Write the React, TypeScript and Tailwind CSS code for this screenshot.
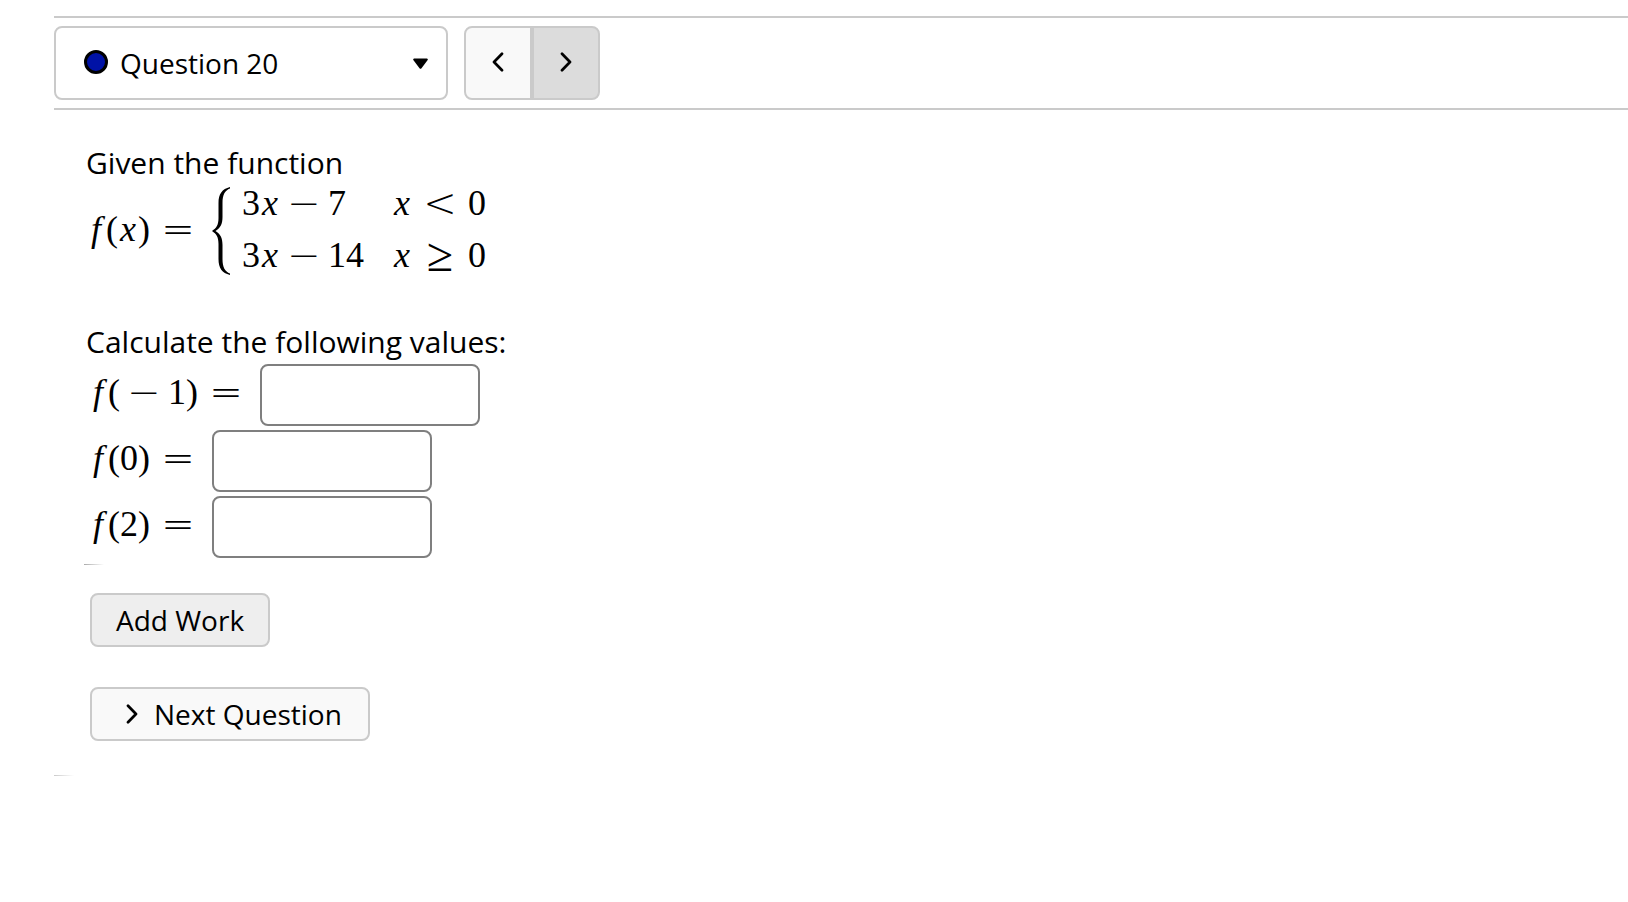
import { useState } from 'react'
import type { ReactNode } from 'react'

const MATH = "font-['Liberation_Serif','Times_New_Roman',serif] text-4xl leading-none"

function Var({ children }: { children: ReactNode }) {
  return <i className="w-5 text-center">{children}</i>
}

function Op({ children, className = 'w-14' }: { children: ReactNode; className?: string }) {
  return (
    <span
      className={`text-center font-['DejaVu_Sans_Light','DejaVu_Sans',sans-serif] text-[40px] leading-9 font-extralight ${className}`}
    >
      {children}
    </span>
  )
}

function Chevron({ direction }: { direction: 'left' | 'right' }) {
  return (
    <svg
      viewBox="0 0 12 20"
      className="h-5 w-3"
      fill="none"
      stroke="currentColor"
      strokeWidth="2.7"
      strokeLinecap="round"
      strokeLinejoin="round"
      aria-hidden="true"
    >
      <path d={direction === 'left' ? 'M10 1.8 2 10l8 8.200' : 'M2 1.8 10 10l-8 8.200'} />
    </svg>
  )
}

const pieces = [
  { constant: '7', relation: <Op>&lt;</Op> },
  { constant: '14', relation: <span className="w-14 text-center text-5xl leading-9">≥</span> },
]

const parts = [
  { id: 'q20-1', negative: true, value: '1' },
  { id: 'q20-2', negative: false, value: '0' },
  { id: 'q20-3', negative: false, value: '2' },
]

export default function App() {
  const [answers, setAnswers] = useState<Record<string, string>>({})

  return (
    <main className="min-h-screen bg-white pt-4 pl-[54px] font-['Open_Sans','Noto_Sans',sans-serif] text-[28px] leading-9 text-black">
      {/* Question navigation */}
      <nav className="flex gap-4 border-y-2 border-[#cacaca] py-2">
        <div className="relative">
          <select
            aria-label="Question"
            className="h-[74px] w-[394px] appearance-none rounded-lg border-2 border-[#cacaca] bg-white pl-16 outline-none"
          >
            <option>Question 20</option>
          </select>
          <span className="pointer-events-none absolute top-6 left-[30px] size-6 rounded-full border-3 border-black bg-[#0012a6]" />
          <svg viewBox="0 0 15 11" className="pointer-events-none absolute top-8 right-5 h-[11px] w-[15px]" aria-hidden="true">
            <path d="M1 .5h13q1.300.6.500 1.800L8.500 10.300q-1 1-2 0L.5 2.300Q-.3 1.100 1 .5z" />
          </svg>
        </div>
        <div className="flex">
          <button
            aria-label="Previous question"
            className="flex h-[74px] w-[68px] items-center justify-center rounded-l-lg border-2 border-[#cacaca] bg-[#f9f9f9] pb-0.5"
          >
            <Chevron direction="left" />
          </button>
          <button
            aria-label="Next question"
            className="flex h-[74px] w-[68px] items-center justify-center rounded-r-lg border-2 border-[#cacaca] bg-[#dcdcdc] pb-0.5"
          >
            <Chevron direction="right" />
          </button>
        </div>
      </nav>

      <section className="px-8 pt-[35px] text-[30px]">
        <p>Given the function</p>

        {/* Piecewise definition */}
        <div className={`flex items-center pt-1 ${MATH}`}>
          <div className="flex pb-1">
            <Var>f</Var>
            <span>(</span>
            <Var>x</Var>
            <span>)</span>
            <Op>=</Op>
          </div>
          <svg viewBox="0 0 18 88" className="ml-1.5 h-[88px] w-[18px]" aria-hidden="true">
            <path d="M18 0C10 2 6.500 7 6.500 16v15c0 7-2 10-6.500 13 4.500 3 6.500 6 6.500 13v15c0 9 3.500 14 11.500 16v-1.500c-5-2-7.500-6-7.500-14.500V58c0-7-2-11-7-14 5-3 7-7 7-14V16c0-8.500 2.500-12.500 7.500-14.500z" />
          </svg>
          <div className="ml-3 grid grid-cols-[auto_auto] gap-x-7 gap-y-4 pb-1">
            {pieces.map((piece) => (
              <div key={piece.constant} className="contents">
                <div className="flex">
                  <span>3</span>
                  <Var>x</Var>
                  <Op className="w-12">−</Op>
                  <span>{piece.constant}</span>
                </div>
                <div className="flex">
                  <Var>x</Var>
                  {piece.relation}
                  <span>0</span>
                </div>
              </div>
            ))}
          </div>
        </div>

        <p className="pt-[47px]">Calculate the following values:</p>

        {/* Answer boxes */}
        <div className="flex flex-col gap-1 pt-1">
          {parts.map((part) => (
            <div key={part.id} className="flex items-center">
              <label htmlFor={part.id} className={`flex pb-1.5 pl-0.5 ${MATH}`}>
                <Var>f</Var>
                <span>(</span>
                {part.negative && <Op className="w-12">−</Op>}
                <span>{part.value}</span>
                <span>)</span>
                <Op>=</Op>
              </label>
              <input
                id={part.id}
                type="text"
                value={answers[part.id] ?? ''}
                onChange={(e) => setAnswers({ ...answers, [part.id]: e.target.value })}
                className="ml-1.5 h-[62px] w-[220px] rounded-lg border-2 border-[#7f7f7f] bg-white px-3 outline-none"
              />
            </div>
          ))}
        </div>
      </section>

      <div className="mt-1.5 ml-[30px] h-px w-5 bg-linear-to-r from-[#aaaaaa] to-white" />

      <div className="flex flex-col items-start gap-10 px-9 pt-7 pb-[34px]">
        <button className="h-[54px] rounded-lg border-2 border-[#cacaca] bg-[#eeeeee] px-6">Add Work</button>
        <button className="flex h-[54px] items-center gap-4 rounded-lg border-2 border-[#cacaca] bg-[#f9f9f9] pr-[26px] pl-[34px]">
          <Chevron direction="right" />
          Next Question
        </button>
      </div>
      <div className="h-px w-5 bg-linear-to-r from-[#cacaca] to-white" />
    </main>
  )
}
